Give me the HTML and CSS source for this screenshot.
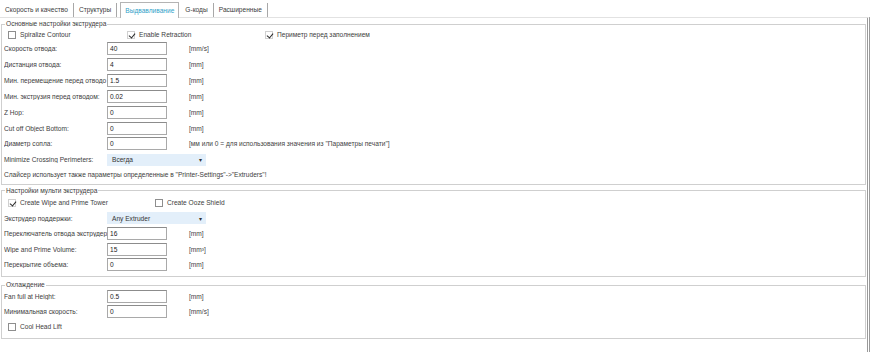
FILE: index.html
```html
<!DOCTYPE html>
<html>
<head>
	<title>Выдвавливание</title>
	<meta charset="utf-8">
	<link rel="stylesheet" href="styles.css">
</head>
<body>

	<div class="tabs">
		<span class="tab">Скорость и качество</span>
		<span class="tab">Структуры</span>
		<span class="tab active">Выдвавливание</span>
		<span class="tab">G-коды</span>
		<span class="tab">Расширенные</span>
	</div>

	<div class="panel">

		<fieldset class="group" id="extruder">
			<legend>Основные настройки экструдера</legend>
			<div class="checks">
				<span class="check"><span class="box"></span>Spiralize Contour</span>
				<span class="check"><span class="box on"></span>Enable Retraction</span>
				<span class="check"><span class="box on"></span>Периметр перед заполнением</span>
			</div>
			<div class="row"><span class="lbl">Скорость отвода:</span><span class="field">40</span><span class="unit">[mm/s]</span></div>
			<div class="row"><span class="lbl">Дистанция отвода:</span><span class="field">4</span><span class="unit">[mm]</span></div>
			<div class="row"><span class="lbl">Мин. перемещение перед отводо</span><span class="field">1.5</span><span class="unit">[mm]</span></div>
			<div class="row"><span class="lbl">Мин. экструзия перед отводом:</span><span class="field">0.02</span><span class="unit">[mm]</span></div>
			<div class="row"><span class="lbl">Z Hop:</span><span class="field">0</span><span class="unit">[mm]</span></div>
			<div class="row"><span class="lbl">Cut off Object Bottom:</span><span class="field">0</span><span class="unit">[mm]</span></div>
			<div class="row"><span class="lbl">Диаметр сопла:</span><span class="field">0</span><span class="unit">[мм или 0 = для использования значения из "Параметры печати"]</span></div>
			<div class="row"><span class="lbl">Minimize Crossing Perimeters:</span><span class="select">Всегда<span class="arrow">&#9662;</span></span></div>
			<div class="note">Слайсер использует также параметры определенные в "Printer-Settings"-&gt;"Extruders"!</div>
		</fieldset>

		<fieldset class="group" id="multi">
			<legend>Настройки мульти экструдера</legend>
			<div class="checks">
				<span class="check"><span class="box on"></span>Create Wipe and Prime Tower</span>
				<span class="check"><span class="box"></span>Create Ooze Shield</span>
			</div>
			<div class="row"><span class="lbl">Экструдер поддержки:</span><span class="select">Any Extruder<span class="arrow">&#9662;</span></span></div>
			<div class="row"><span class="lbl">Переключатель отвода экструдер</span><span class="field">16</span><span class="unit">[mm]</span></div>
			<div class="row"><span class="lbl">Wipe and Prime Volume:</span><span class="field">15</span><span class="unit">[mm³]</span></div>
			<div class="row"><span class="lbl">Перекрытие объема:</span><span class="field">0</span><span class="unit">[mm]</span></div>
		</fieldset>

		<fieldset class="group" id="cooling">
			<legend>Охлаждение</legend>
			<div class="row"><span class="lbl">Fan full at Height:</span><span class="field">0.5</span><span class="unit">[mm]</span></div>
			<div class="row"><span class="lbl">Минимальная скорость:</span><span class="field">0</span><span class="unit">[mm/s]</span></div>
			<div class="row"><span class="check"><span class="box"></span>Cool Head Lift</span></div>
		</fieldset>

	</div>

</body>
</html>
```

FILE: styles.css
```css
* {
	margin: 0px;
	box-sizing: border-box;
}
body {
	background-color: white;
	color: #3d3d3d;
	font-family: "Liberation Sans", Arial, sans-serif;
	font-size: 6.6px;
	width: 870px;
	height: 352px;
	overflow: hidden;
}
.tabs {
	display: flex;
	align-items: flex-end;
	height: 17px;
}
.tab {
	height: 14px;
	line-height: 13px;
	padding: 0px 5px 0px 5px;
	border-right: 1px solid #a8a8a8;
	white-space: nowrap;
}
.tab.active {
	height: 16px;
	line-height: 15px;
	margin: 0px 1px 0px 3px;
	padding: 0px 4px;
	border: 1px solid #b4b4b4;
	border-bottom: 0px;
	color: #2f9fc9;
	background-color: white;
	position: relative;
	top: 1px;
}
.panel {
	height: 335px;
	border-top: 1px solid #e2e2e2;
	border-right: 3px double #9a9a9a;
	padding: 2px 1px 0px 1px;
}
.group {
	border: 1px solid #cfcfcf;
	padding: 0px 1px;
	min-width: 0px;
}
.group legend {
	line-height: 8px;
	height: 8px;
	padding: 0px 1px;
	margin-left: 2px;
}
#extruder {
	padding-bottom: 2px;
}
#multi {
	margin-top: 2px;
	padding-bottom: 4px;
}
#cooling {
	margin-top: 4px;
	padding-bottom: 4px;
}
.checks {
	display: grid;
	align-items: center;
	padding-left: 5px;
}
#extruder .checks {
	height: 13px;
	grid-template-columns: 119px 138px auto;
}
#multi .checks {
	height: 16px;
	grid-template-columns: 147px auto;
}
.check {
	display: flex;
	align-items: center;
	white-space: nowrap;
}
.box {
	width: 8px;
	height: 8px;
	border: 1px solid #8e8e8e;
	margin-right: 4px;
	background-color: white;
	position: relative;
}
.box.on {
	border-color: #d0d0d0;
}
.box.on::after {
	content: "";
	position: absolute;
	left: 1.5px;
	top: 0px;
	width: 3px;
	height: 5px;
	border: solid #2a2a2a;
	border-width: 0px 1.5px 1.5px 0px;
	transform: rotate(40deg);
}
.row {
	display: flex;
	align-items: center;
	padding-left: 1px;
	white-space: nowrap;
}
#extruder .row {
	height: 15.85px;
}
#multi .row {
	height: 15.4px;
}
#cooling .row {
	height: 15px;
}
#cooling .row .check {
	padding-left: 4px;
}
.lbl {
	width: 103px;
	overflow: hidden;
	white-space: nowrap;
}
.field {
	width: 60px;
	height: 13px;
	line-height: 11px;
	border: 1px solid #a9a9a9;
	border-top-color: #8c8c8c;
	padding-left: 2px;
	color: #222;
	background-color: white;
}
.unit {
	margin-left: 22px;
	color: #444;
}
.select {
	display: flex;
	justify-content: space-between;
	align-items: center;
	width: 99px;
	height: 12px;
	padding: 0px 4px 0px 5px;
	background-color: #e3effa;
	color: #333;
}
.arrow {
	font-size: 6px;
	color: #333;
}
.note {
	height: 14px;
	line-height: 14px;
	padding-left: 1px;
}
```
